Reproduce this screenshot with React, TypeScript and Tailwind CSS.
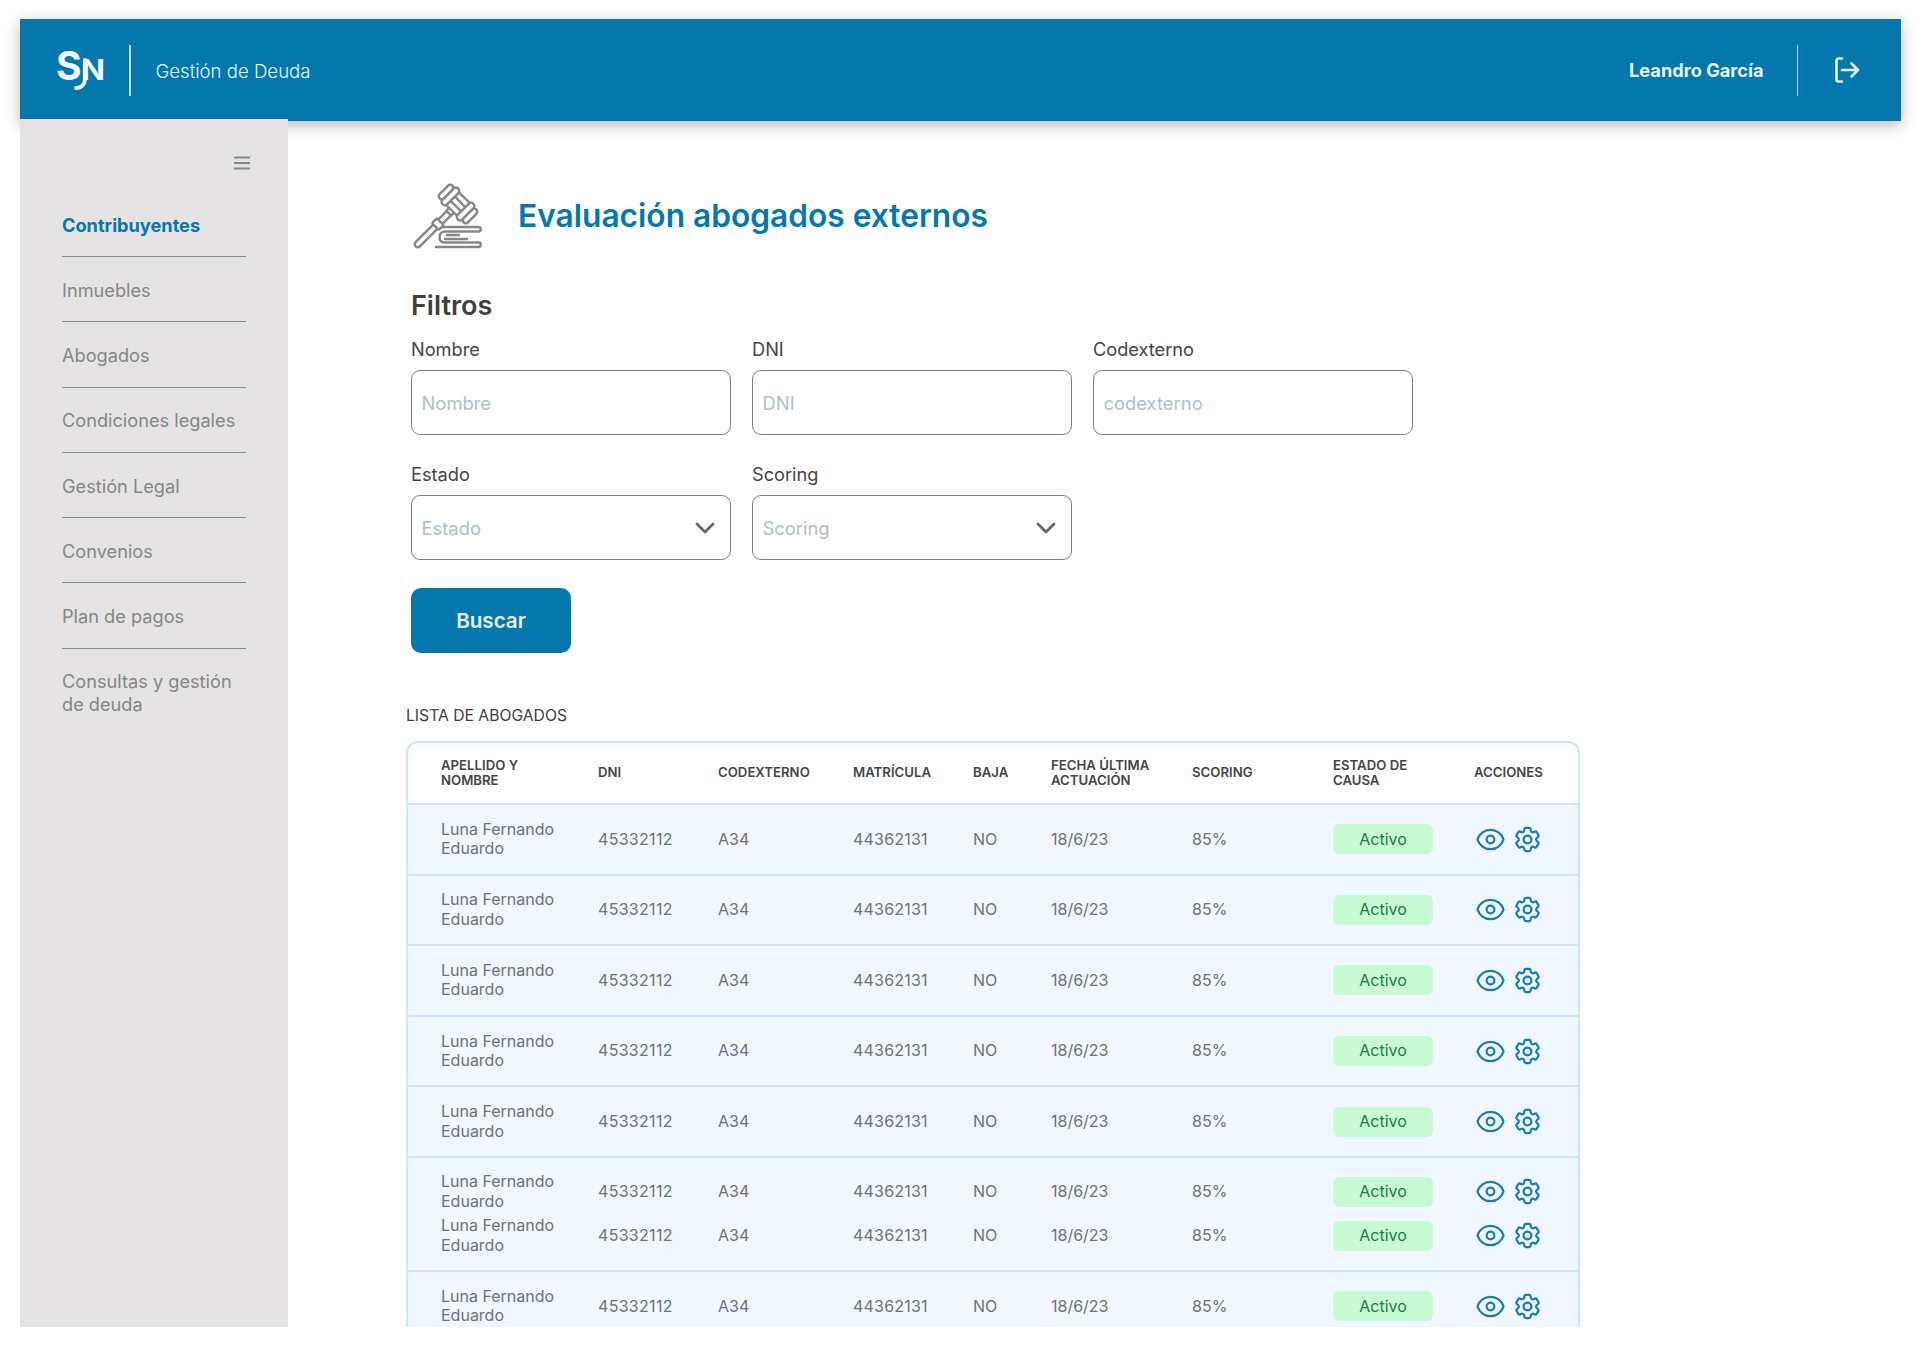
import { ChevronDown } from "lucide-react";
import { HiOutlineCog6Tooth, HiOutlineEye } from "react-icons/hi2";

const NAV = ["Inmuebles", "Abogados", "Condiciones legales", "Gestión Legal", "Convenios", "Plan de pagos"];

function Logo() {
  return (
    <svg className="-mb-[11px] -mt-[11px]" width="52" height="62" viewBox="0 -11 52 62" fill="#f2f9fd" aria-label="SN">
      <text x="0" y="30" fontFamily="Inter, sans-serif" fontWeight="700" fontSize="39">S</text>
      <text x="25" y="30" fontFamily="Inter, sans-serif" fontWeight="700" fontSize="29" textLength="24" lengthAdjust="spacingAndGlyphs">N</text>
      <path d="M29 10 L29 28 C29 35 25 38 20 38" fill="none" stroke="#f2f9fd" strokeWidth="3.8" strokeLinecap="round" />
    </svg>
  );
}

function Gavel() {
  return (
    <svg width="73" height="68" viewBox="12 12 73 68" fill="none" stroke="#868686" strokeWidth="2.4" strokeLinecap="round" strokeLinejoin="round">
      <path d="M39 57H79.5A2.2 2.2 0 0 1 79.5 61.5H46C41.5 61.5 40.5 65 40.5 67C40.5 69.5 41.5 72.5 46 72.5H79.5A2.2 2.2 0 0 1 79.5 77H37" />
      <path d="M48 65H60M46 69H68" />
      <g transform="translate(59 34) rotate(-45)" fill="#fff">
        <rect x="-60" y="-3" width="50" height="6" rx="3" />
        <rect x="-32" y="-4.8" width="7" height="9.6" rx="1.5" />
        <rect x="-13" y="-3.5" width="6" height="7" rx="1" />
        <rect x="-9" y="-8" width="18" height="16" />
        <path d="M-3 -8V8M3 -8V8" />
        <rect x="-11" y="-14" width="22" height="6.5" rx="3" />
        <rect x="-11" y="7.5" width="22" height="6.5" rx="3" />
        <rect x="-9" y="-20" width="18" height="6" rx="3" />
        <rect x="-9" y="14" width="18" height="6" rx="3" />
      </g>
    </svg>
  );
}

function Field({ label, placeholder }: { label: string; placeholder: string }) {
  return (
    <label className="block">
      <span className="block pt-[1px] text-[18.2px] leading-[23px] text-[#444444]">{label}</span>
      <input
        placeholder={placeholder}
        className="mt-[9px] block h-[65px] w-[320px] rounded-[9px] border-[1.5px] border-[#7f7f7f] bg-white px-[9.5px] pt-[0px] text-[18.4px] text-[#444444] outline-none placeholder:text-[#aebfca]"
      />
    </label>
  );
}

function SelectField({ label }: { label: string }) {
  return (
    <div>
      <span className="block pt-[1px] text-[18.2px] leading-[23px] text-[#444444]">{label}</span>
      <div className="mt-[9px] flex h-[65px] w-[320px] items-center justify-between rounded-[9px] border-[1.5px] border-[#7f7f7f] bg-white pl-[9.5px] pr-[9px]">
        <span className="pt-[2px] text-[18.4px] text-[#aebfca]">{label}</span>
        <ChevronDown size={32} strokeWidth={2.1} color="#666666" />
      </div>
    </div>
  );
}

const cell = "text-[16px] leading-[19.5px] text-[#6b7280] align-middle";

function Row({ className = "", border = true }: { className?: string; border?: boolean }) {
  const tr = border ? "border-b-2 border-[#cfe4fb]" : "";
  return (
    <tr className={`bg-[#f0f7ff] ${tr}`}>
      <td className={`${cell} pl-[33px] pr-[40px] ${className}`}>Luna Fernando Eduardo</td>
      <td className={`${cell} tracking-[0.3px] ${className}`}>45332112</td>
      <td className={`${cell} ${className}`}>A34</td>
      <td className={`${cell} tracking-[0.2px] ${className}`}>44362131</td>
      <td className={`${cell} ${className}`}>NO</td>
      <td className={`${cell} ${className}`}>18/6/23</td>
      <td className={`${cell} ${className}`}>85%</td>
      <td className={`${cell} ${className}`}>
        <span className="flex h-[30px] w-[100px] items-center justify-center rounded-[6px] bg-[#c9fbd2] text-[#15803d]">Activo</span>
      </td>
      <td className={`${cell} ${className}`}>
        <div className="flex items-center gap-[6px] pl-[1px] text-[#1a7cab]">
          <HiOutlineEye size={31} strokeWidth={1.7} />
          <HiOutlineCog6Tooth size={31} strokeWidth={1.7} />
        </div>
      </td>
    </tr>
  );
}

const HEADS = ["APELLIDO Y NOMBRE", "DNI", "CODEXTERNO", "MATRÍCULA", "BAJA", "FECHA ÚLTIMA ACTUACIÓN", "SCORING", "ESTADO DE CAUSA", "ACCIONES"];

export default function App() {
  return (
    <div className="flex h-[1351px] flex-col overflow-hidden bg-white pb-[24px] pl-[20px] pr-[19px] pt-[19px] font-['Inter',sans-serif]">
      <header className="flex h-[102px] shrink-0 items-center justify-between bg-[#0477ad] pl-[36px] pr-[41px] shadow-[0_4px_14px_rgba(0,0,0,0.28)]">
        <div className="flex items-center">
          <Logo />
          <div className="ml-[21px] h-[51px] w-[1.5px] bg-[#bfe3f7]" />
          <span className="ml-[25px] pt-[3px] text-[18.6px] font-light text-[#e6f4fb]">Gestión de Deuda</span>
        </div>
        <div className="flex items-center">
          <span className="pt-[2px] text-[18.2px] font-bold text-[#e6f4fb]">Leandro García</span>
          <div className="ml-[33px] h-[51px] w-[1.5px] bg-[#bfe3f7]" />
          <svg className="ml-[34px]" width="28" height="28" viewBox="0 0 28 28" fill="none" stroke="#e6f4fb" strokeWidth="2.6" strokeLinecap="round" strokeLinejoin="round">
            <path d="M10 2.5H6.5A2 2 0 0 0 4.5 4.5V23.5A2 2 0 0 0 6.5 25.5H10" />
            <path d="M10 14H26M19.5 7.5L26 14L19.5 20.5" />
          </svg>
        </div>
      </header>

      <div className="-mt-[2px] flex min-h-0 flex-1">
        <aside className="relative z-10 w-[268px] shrink-0 bg-[#e5e3e4] pl-[42px] pr-[42px]">
          <div className="-mr-[6px] flex justify-end pt-[34px]">
            <svg width="20" height="20" viewBox="0 0 20 20" stroke="#868686" strokeWidth="1.8">
              <path d="M2 4.5H18M2 10H18M2 15.5H18" />
            </svg>
          </div>
          <nav className="mt-[19px] text-[18.2px] leading-[22px]">
            <div className="border-b-[1.5px] border-[#8a8a8a] pb-[20.6px] pt-[21.65px] font-bold text-[#0477ad]">Contribuyentes</div>
            {NAV.map((n) => (
              <div key={n} className="border-b-[1.5px] border-[#8a8a8a] pb-[20.6px] pt-[21.65px] text-[#868686]">{n}</div>
            ))}
            <div className="pt-[21.65px] leading-[23px] text-[#868686]">Consultas y gestión de deuda</div>
          </nav>
        </aside>

        <main className="min-w-0 flex-1 overflow-hidden pl-[123px] pt-[63px]">
          <div className="flex items-center gap-[34px]">
            <Gavel />
            <h1 className="text-[31.7px] font-semibold leading-[40px] text-[#0477ad]">Evaluación abogados externos</h1>
          </div>
          <h2 className="mt-[39px] text-[27px] font-semibold leading-[34px] text-[#404040]">Filtros</h2>
          <div className="mt-[14px] grid grid-cols-[320px_320px_320px] gap-x-[21px] gap-y-[27px]">
            <Field label="Nombre" placeholder="Nombre" />
            <Field label="DNI" placeholder="DNI" />
            <Field label="Codexterno" placeholder="codexterno" />
            <SelectField label="Estado" />
            <SelectField label="Scoring" />
          </div>
          <button className="mt-[28px] h-[65px] w-[160px] rounded-[10px] bg-[#0477ad] pt-[2px] text-[20.6px] font-semibold text-[#e6f4fb]">Buscar</button>

          <div className="-ml-[5px] mt-[53px] w-[1174px]">
            <p className="text-[15.7px] leading-[20px] text-[#404040]">LISTA DE ABOGADOS</p>
            <div className="mt-[15px] rounded-t-[12px] border-x-2 border-t-2 border-[#cfe4fb]">
              <table className="w-full table-fixed border-collapse">
                <colgroup>
                  <col className="w-[190px]" />
                  <col className="w-[120px]" />
                  <col className="w-[135px]" />
                  <col className="w-[120px]" />
                  <col className="w-[78px]" />
                  <col className="w-[141px]" />
                  <col className="w-[141px]" />
                  <col className="w-[141px]" />
                  <col />
                </colgroup>
                <thead>
                  <tr className="h-[61px] border-b-2 border-[#cfe4fb]">
                    {HEADS.map((h, i) => (
                      <th key={h} className={`pr-[34px] text-left align-middle text-[13.2px] font-semibold leading-[15.5px] text-[#454545] whitespace-normal ${i === 0 ? "pl-[33px]" : ""} ${i === 8 ? "pr-0" : ""}`}>{h}</th>
                    ))}
                  </tr>
                </thead>
                <tbody>
                  <Row className="h-[70.6px]" />
                  <Row className="h-[70.6px]" />
                  <Row className="h-[70.6px]" />
                  <Row className="h-[70.6px]" />
                  <Row className="h-[70.6px]" />
                  <Row className="h-[57px] pt-[12px]" border={false} />
                  <Row className="h-[57px] pb-[12px]" />
                  <Row className="h-[70.6px]" />
                </tbody>
              </table>
            </div>
          </div>
        </main>
      </div>
    </div>
  );
}
